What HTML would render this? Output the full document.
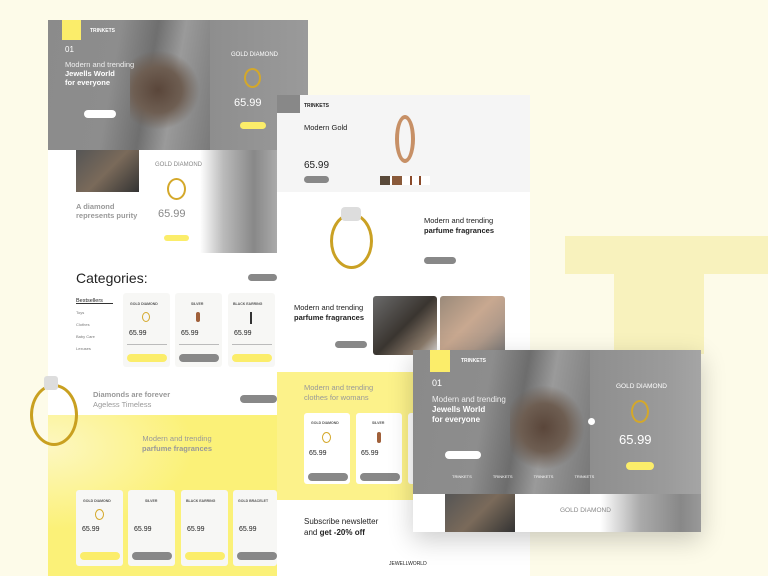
<!DOCTYPE html>
<html><head><meta charset="utf-8"><style>
*{margin:0;padding:0;box-sizing:border-box}
body{width:768px;height:576px;overflow:hidden;background:#fdfbe9;font-family:"Liberation Sans",sans-serif;position:relative}
.a{position:absolute}
.t{position:absolute;white-space:nowrap}
.ring{position:absolute;border:2px solid #d4a82a;border-radius:50%}
.btn{position:absolute;border-radius:8px}
.card{position:absolute;background:#f7f7f5;border-radius:3px}
.ln{position:absolute;height:1px;background:#bbb}
.s{position:absolute;white-space:nowrap;font-size:3.5px;color:#555;font-weight:bold}
</style></head><body>
<div class="a" style="left:565px;top:236px;width:203px;height:38px;background:#f8f2bd"></div>
<div class="a" style="left:614px;top:274px;width:90px;height:80px;background:#f8f2bd"></div>

<!-- PAGE 1 -->
<div class="a" style="left:48px;top:20px;width:229px;height:556px;background:#fff"></div>
<div class="a" style="left:48px;top:20px;width:162px;height:130px;background:linear-gradient(100deg,#8b8b8b 0%,#8d8d8d 40%,#6f6f6f 60%,#9a9a9a 75%,#7a7a7a 100%)"></div>
<div class="a" style="left:130px;top:50px;width:70px;height:80px;background:radial-gradient(ellipse at 40% 50%,#5a463a 0%,#6e5e52 40%,transparent 70%)"></div>
<div class="a" style="left:210px;top:20px;width:98px;height:130px;background:linear-gradient(90deg,#8e8e8e,#9a9a9a)"></div>
<div class="a" style="left:62px;top:20px;width:19px;height:20px;background:#fbed6a"></div>
<div class="t" style="left:90px;top:28px;font-size:5px;color:#fff;font-weight:bold">TRINKETS</div>
<div class="t" style="left:65px;top:45px;font-size:8px;color:#fff">01</div>
<div class="t" style="left:65px;top:60px;font-size:7.5px;color:#eee;line-height:9px">Modern and trending<br><b style="color:#fff">Jewells World<br>for everyone</b></div>
<div class="btn" style="left:84px;top:110px;width:32px;height:8px;background:#fff"></div>
<div class="t" style="left:231px;top:52px;font-size:6px;color:#fff">GOLD DIAMOND</div>
<div class="ring" style="left:244px;top:68px;width:17px;height:20px"></div>
<div class="t" style="left:234px;top:97px;font-size:11px;color:#fff">65.99</div>
<div class="btn" style="left:240px;top:122px;width:26px;height:7px;background:#fbed6a"></div>
<div class="a" style="left:76px;top:150px;width:63px;height:42px;background:linear-gradient(135deg,#555 0%,#7a6a5a 50%,#333 100%)"></div>
<div class="a" style="left:200px;top:150px;width:77px;height:103px;background:linear-gradient(90deg,#fff 0%,#bbb 30%,#888 70%,#aaa 100%)"></div>
<div class="t" style="left:155px;top:162px;font-size:6px;color:#888">GOLD DIAMOND</div>
<div class="ring" style="left:167px;top:178px;width:19px;height:22px"></div>
<div class="t" style="left:158px;top:208px;font-size:11px;color:#888">65.99</div>
<div class="btn" style="left:164px;top:235px;width:25px;height:6px;background:#fbed6a"></div>
<div class="t" style="left:76px;top:202px;font-size:7.5px;color:#999;line-height:9px;font-weight:bold">A diamond<br>represents purity</div>
<div class="t" style="left:76px;top:270px;font-size:14px;color:#222">Categories:</div>
<div class="btn" style="left:248px;top:274px;width:29px;height:7px;background:#888"></div>
<div class="t" style="left:76px;top:295px;font-size:5.5px;color:#222;line-height:12px">Bestsellers<br><span style="color:#777;font-size:4px;line-height:9px">Toys<br>Clothes<br>Baby Care<br>Lexuses</span></div>
<div class="a" style="left:76px;top:303px;width:37px;height:1px;background:#333"></div>
<div class="card" style="left:123px;top:293px;width:47px;height:74px"></div>
<div class="card" style="left:175px;top:293px;width:47px;height:74px"></div>
<div class="card" style="left:228px;top:293px;width:47px;height:74px"></div>
<div class="s" style="left:130px;top:302px">GOLD DIAMOND</div>
<div class="s" style="left:191px;top:302px">SILVER</div>
<div class="s" style="left:233px;top:302px">BLACK EARRING</div>
<div class="ring" style="left:142px;top:312px;width:8px;height:10px;border-width:1px"></div>
<div class="a" style="left:196px;top:312px;width:4px;height:10px;background:#a0603a;border-radius:2px"></div>
<div class="a" style="left:250px;top:312px;width:2px;height:12px;background:#333"></div>
<div class="ln" style="left:127px;top:344px;width:40px"></div>
<div class="ln" style="left:179px;top:344px;width:40px"></div>
<div class="ln" style="left:232px;top:344px;width:40px"></div>
<div class="btn" style="left:127px;top:354px;width:40px;height:8px;background:#fbed6a"></div>
<div class="btn" style="left:179px;top:354px;width:40px;height:8px;background:#888"></div>
<div class="btn" style="left:232px;top:354px;width:40px;height:8px;background:#fbed6a"></div>
<div class="t" style="left:129px;top:330px;font-size:7px;color:#222">65.99</div>
<div class="t" style="left:181px;top:330px;font-size:7px;color:#222">65.99</div>
<div class="t" style="left:234px;top:330px;font-size:7px;color:#222">65.99</div>
<div class="a" style="left:48px;top:415px;width:229px;height:161px;background:radial-gradient(ellipse at 0% 20%,#fdf7c0 0%,#fbf178 45%)"></div>
<div class="ring" style="left:30px;top:384px;width:48px;height:62px;border-width:3px;border-color:#c9a020"></div>
<div class="a" style="left:44px;top:376px;width:14px;height:14px;background:#ddd;border-radius:3px"></div>
<div class="t" style="left:93px;top:390px;font-size:7.5px;color:#999;line-height:9.5px"><b>Diamonds are forever</b><br>Ageless Timeless</div>
<div class="btn" style="left:240px;top:395px;width:37px;height:8px;background:#888"></div>
<div class="t" style="left:142px;top:434px;font-size:7.5px;color:#999;line-height:10px;text-align:center">Modern and trending<br><b>parfume fragrances</b></div>
<div class="card" style="left:76px;top:490px;width:47px;height:76px"></div>
<div class="card" style="left:128px;top:490px;width:47px;height:76px"></div>
<div class="card" style="left:181px;top:490px;width:47px;height:76px"></div>
<div class="card" style="left:233px;top:490px;width:44px;height:76px"></div>
<div class="s" style="left:83px;top:499px">GOLD DIAMOND</div>
<div class="s" style="left:145px;top:499px">SILVER</div>
<div class="s" style="left:186px;top:499px">BLACK EARRING</div>
<div class="s" style="left:238px;top:499px">GOLD BRACELET</div>
<div class="ring" style="left:95px;top:509px;width:9px;height:11px;border-width:1px"></div>
<div class="t" style="left:82px;top:526px;font-size:7px;color:#222">65.99</div>
<div class="t" style="left:134px;top:526px;font-size:7px;color:#222">65.99</div>
<div class="t" style="left:187px;top:526px;font-size:7px;color:#222">65.99</div>
<div class="t" style="left:239px;top:526px;font-size:7px;color:#222">65.99</div>
<div class="btn" style="left:80px;top:552px;width:40px;height:8px;background:#fbed6a"></div>
<div class="btn" style="left:132px;top:552px;width:40px;height:8px;background:#888"></div>
<div class="btn" style="left:185px;top:552px;width:40px;height:8px;background:#fbed6a"></div>
<div class="btn" style="left:237px;top:552px;width:40px;height:8px;background:#888"></div>

<!-- PAGE 2 -->
<div class="a" style="left:277px;top:95px;width:253px;height:481px;background:#fff"></div>
<div class="a" style="left:277px;top:95px;width:253px;height:97px;background:#f5f5f5"></div>
<div class="a" style="left:277px;top:95px;width:23px;height:18px;background:#888"></div>
<div class="t" style="left:304px;top:103px;font-size:5px;font-weight:bold;color:#222">TRINKETS</div>
<div class="t" style="left:304px;top:123px;font-size:7.5px;color:#222">Modern Gold</div>
<div class="t" style="left:304px;top:160px;font-size:10px;color:#222">65.99</div>
<div class="btn" style="left:304px;top:176px;width:25px;height:7px;background:#888"></div>
<div class="a" style="left:395px;top:115px;width:20px;height:48px;border:4px solid #c79066;border-radius:50%"></div>
<div class="a" style="left:380px;top:176px;width:50px;height:9px;background:linear-gradient(90deg,#5a4a3a 0 20%,#fff 20% 24%,#8a5a3a 24% 44%,#fff 44% 60%,#8a4a2a 60% 64%,#fff 64% 78%,#8a4a2a 78% 82%,#fff 82%)"></div>
<div class="ring" style="left:330px;top:213px;width:43px;height:56px;border-width:3px;border-color:#caa124"></div>
<div class="a" style="left:341px;top:207px;width:20px;height:14px;background:#ddd;border-radius:4px"></div>
<div class="t" style="left:424px;top:216px;font-size:7.5px;color:#222;line-height:10px">Modern and trending<br><b>parfume fragrances</b></div>
<div class="btn" style="left:424px;top:257px;width:32px;height:7px;background:#888"></div>
<div class="t" style="left:294px;top:303px;font-size:7.5px;color:#222;line-height:10px">Modern and trending<br><b>parfume fragrances</b></div>
<div class="btn" style="left:335px;top:341px;width:32px;height:7px;background:#888"></div>
<div class="a" style="left:373px;top:296px;width:64px;height:59px;border-radius:3px;background:linear-gradient(135deg,#6a6a6a,#3a3530 50%,#8a7a6a 80%,#ddd)"></div>
<div class="a" style="left:440px;top:296px;width:65px;height:59px;border-radius:3px;background:linear-gradient(135deg,#9a8a7a,#c8a890 45%,#b09a8a 70%,#777)"></div>
<div class="a" style="left:277px;top:372px;width:253px;height:128px;background:#fcf28a"></div>
<div class="t" style="left:304px;top:383px;font-size:7.5px;color:#999;line-height:10px">Modern and trending<br>clothes for womans</div>
<div class="card" style="left:304px;top:413px;width:46px;height:71px;background:#fff"></div>
<div class="card" style="left:356px;top:413px;width:46px;height:71px;background:#fff"></div>
<div class="card" style="left:408px;top:413px;width:10px;height:71px;background:#fff"></div>
<div class="s" style="left:311px;top:421px">GOLD DIAMOND</div>
<div class="s" style="left:372px;top:421px">SILVER</div>
<div class="ring" style="left:322px;top:432px;width:9px;height:11px;border-width:1px"></div>
<div class="a" style="left:377px;top:432px;width:4px;height:11px;background:#a0603a;border-radius:2px"></div>
<div class="t" style="left:309px;top:450px;font-size:7px;color:#222">65.99</div>
<div class="t" style="left:361px;top:450px;font-size:7px;color:#222">65.99</div>
<div class="btn" style="left:308px;top:473px;width:40px;height:8px;background:#888"></div>
<div class="btn" style="left:360px;top:473px;width:40px;height:8px;background:#888"></div>
<div class="t" style="left:304px;top:516px;font-size:8px;color:#222;line-height:11px">Subscribe newsletter<br>and <b>get -20% off</b></div>
<div class="t" style="left:389px;top:561px;font-size:5px;color:#222">JEWELLWORLD</div>

<!-- PAGE 3 -->
<div class="a" style="left:413px;top:350px;width:288px;height:182px;background:#fff;box-shadow:0 8px 24px rgba(0,0,0,.2)"></div>
<div class="a" style="left:413px;top:350px;width:177px;height:144px;background:linear-gradient(100deg,#8a8a8a 0%,#8d8d8d 40%,#6d6d6d 58%,#9a9a9a 72%,#777 100%)"></div>
<div class="a" style="left:510px;top:385px;width:75px;height:85px;background:radial-gradient(ellipse at 45% 50%,#5a463a 0%,#6e5e52 40%,transparent 70%)"></div>
<div class="a" style="left:590px;top:350px;width:111px;height:144px;background:linear-gradient(90deg,#8e8e8e,#9b9b9b 70%,#a5a5a5)"></div>
<div class="a" style="left:430px;top:350px;width:20px;height:22px;background:#fbed6a"></div>
<div class="t" style="left:461px;top:358px;font-size:5px;font-weight:bold;color:#fff">TRINKETS</div>
<div class="t" style="left:432px;top:378px;font-size:9px;color:#fff">01</div>
<div class="t" style="left:432px;top:395px;font-size:8px;color:#eee;line-height:10px">Modern and trending<br><b style="color:#fff">Jewells World<br>for everyone</b></div>
<div class="btn" style="left:445px;top:451px;width:36px;height:8px;background:#fff"></div>
<div class="t" style="left:452px;top:474px;font-size:4px;color:#fff;word-spacing:20px">TRINKETS TRINKETS TRINKETS TRINKETS</div>
<div class="a" style="left:588px;top:418px;width:7px;height:7px;border-radius:50%;background:#fff"></div>
<div class="t" style="left:616px;top:383px;font-size:6.5px;color:#fff">GOLD DIAMOND</div>
<div class="ring" style="left:631px;top:400px;width:18px;height:23px"></div>
<div class="t" style="left:619px;top:432px;font-size:13px;color:#fff">65.99</div>
<div class="btn" style="left:626px;top:462px;width:28px;height:8px;background:#fbed6a"></div>
<div class="a" style="left:445px;top:494px;width:70px;height:38px;background:linear-gradient(135deg,#555,#7a6a5a 50%,#333)"></div>
<div class="a" style="left:600px;top:494px;width:101px;height:38px;background:linear-gradient(90deg,#fff,#aaa 40%,#888 80%,#999)"></div>
<div class="t" style="left:560px;top:507px;font-size:6.5px;color:#888">GOLD DIAMOND</div>
</body></html>
